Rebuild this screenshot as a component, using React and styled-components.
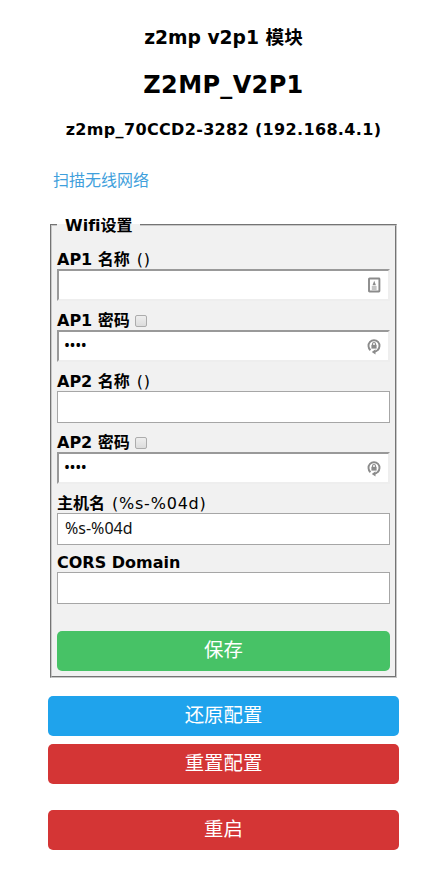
import React from "react";
import styled, { createGlobalStyle } from "styled-components";

const GlobalStyle = createGlobalStyle`
  * { box-sizing: border-box; }
  body {
    margin: 0;
    background: #fff;
    color: #000;
    font: 16px/20px "DejaVu Sans", "Noto Sans CJK SC", sans-serif;
    font-variant-ligatures: none;
  }
`;

const Page = styled.main`
  width: 351px;
  margin: 0 0 0 48px;
  padding-top: 24px;
`;

const Header = styled.header`
  display: flex;
  flex-direction: column;
  align-items: center;
  white-space: nowrap;
`;

const ModuleName = styled.h3`
  margin: 0;
  font-size: 18.7px;
  line-height: 28px;
`;

const DeviceName = styled.h2`
  margin: 19px 0 0;
  font-size: 24px;
  line-height: 28px;
  letter-spacing: 0.35px;
`;

const Address = styled.h4`
  margin: 20px 0 0;
  font-size: 16px;
  line-height: 22px;
  letter-spacing: 0.34px;
`;

const ScanLink = styled.a`
  display: block;
  width: max-content;
  margin: 30px 0 0 5px;
  color: #3f9fdc;
  text-decoration: none;
  line-height: 20px;
`;

const Panel = styled.fieldset`
  width: 347px;
  height: 463px;
  margin: 24px 0 18px 2px;
  padding: 0 5px;
  border: 2px groove #c8c8c8;
  background: #f1f1f1;
`;

const Legend = styled.legend`
  height: 20px;
  padding: 0 7px 0 8px;
  font-weight: bold;
  line-height: 22px;
`;

const Field = styled.div`
  height: ${({ $height }) => $height || 61}px;
  display: flex;
  flex-direction: column;
  justify-content: flex-end;
`;

const Label = styled.label`
  display: flex;
  align-items: center;
  height: ${({ $low }) => ($low ? 18 : 19)}px;
  white-space: pre;
`;

const Hint = styled.span`
  margin-left: 1px;
  letter-spacing: 0.8px;
`;

const Checkbox = styled.input`
  appearance: none;
  width: 12px;
  height: 12px;
  margin: 0 0 0 5px;
  border: 1px solid #acacac;
  border-radius: 2px;
  background: linear-gradient(#eee, #dcdcdc);
`;

const InputFrame = styled.div`
  display: flex;
  align-items: center;
  height: 32px;
  padding: 0 ${({ $inset }) => ($inset ? 7 : 8)}px 0 ${({ $inset }) => ($inset ? 5 : 7)}px;
  border: 1px solid #a6a6a6;
  background: #fff;
  ${({ $inset }) =>
    $inset &&
    `
      border-width: 2px;
      border-color: #999 #eee #eee #999;
    `}
`;

const Input = styled.input`
  flex: 1;
  min-width: 0;
  padding: 0 0 2px;
  border: 0;
  outline: 0;
  background: transparent;
  color: #111;
  font: 16px/20px "Noto Sans", sans-serif;
`;

const Dots = styled(Input)`
  color: #000;
  letter-spacing: -0.4px;
`;

const Button = styled.button`
  display: block;
  width: 100%;
  height: 40px;
  margin: ${({ $gap }) => $gap || 0}px 0 0;
  padding: 0;
  border: 0;
  border-radius: 5px;
  background: ${({ $color }) => $color};
  color: #fff;
  font: 19.4px/40px "DejaVu Sans", "Noto Sans CJK SC", sans-serif;
`;

const Icon = styled.svg`
  flex: none;
  width: 14px;
  height: 17px;
`;

const ContactIcon = () => (
  <Icon viewBox="0 0 14 17" fill="none" stroke="#8b8b8b">
    <rect x="2" y="1.5" width="10.4" height="13" rx="0.5" strokeWidth="1.9" />
    <path d="M7.2 3.8L8.9 8.3H5.5Z" fill="#8b8b8b" stroke="none" />
    <path d="M4.8 10h4.8M4.8 12h4.8" strokeWidth="1.1" />
  </Icon>
);

const LockIcon = () => (
  <Icon viewBox="0 0 14 17" fill="none" stroke="#8b8b8b">
    <path d="M3.4 12.2A5.5 5.7 0 1 1 10.6 12.2Q9.3 13.6 7 13.8" strokeWidth="1.9" />
    <path d="M8.5 11.2v5.4L4.8 13.9z" fill="#8b8b8b" stroke="none" />
    <path d="M5.5 7.5V6a1.5 1.5 0 0 1 3 0V7.5" strokeWidth="1.1" />
    <rect x="4.4" y="6.8" width="5.2" height="3.8" fill="#8b8b8b" stroke="none" />
  </Icon>
);

const fields = [
  { name: "AP1 名称", hint: " ()", icon: "contact", height: 66 },
  { name: "AP1 密码", secret: true, icon: "lock", value: "••••" },
  { name: "AP2 名称", hint: " ()" },
  { name: "AP2 密码", secret: true, icon: "lock", value: "••••" },
  { name: "主机名", hint: " (%s-%04d)", value: "%s-%04d" },
  { name: "CORS Domain", height: 59, low: true },
];

export default function App() {
  return (
    <>
      <GlobalStyle />
      <Page>
        <Header>
          <ModuleName>z2mp v2p1 模块</ModuleName>
          <DeviceName>Z2MP_V2P1</DeviceName>
          <Address>z2mp_70CCD2-3282 (192.168.4.1)</Address>
        </Header>
        <ScanLink href="#">扫描无线网络</ScanLink>
        <Panel>
          <Legend>Wifi设置</Legend>
          {fields.map(({ name, hint, icon, secret, value, height, low }) => (
            <Field key={name} $height={height}>
              <Label $low={low}>
                <b>{name}</b>
                {hint && <Hint>{hint}</Hint>}
                {secret && <Checkbox type="checkbox" />}
              </Label>
              <InputFrame $inset={Boolean(icon)}>
                {secret ? (
                  <Dots defaultValue={value} aria-label={name} />
                ) : (
                  <Input defaultValue={value} aria-label={name} />
                )}
                {icon === "contact" && <ContactIcon />}
                {icon === "lock" && <LockIcon />}
              </InputFrame>
            </Field>
          ))}
          <Button $color="#47c266" $gap={27}>保存</Button>
        </Panel>
        <Button $color="#1fa3ec">还原配置</Button>
        <Button $color="#d43535" $gap={8}>重置配置</Button>
        <Button $color="#d43535" $gap={26}>重启</Button>
      </Page>
    </>
  );
}
